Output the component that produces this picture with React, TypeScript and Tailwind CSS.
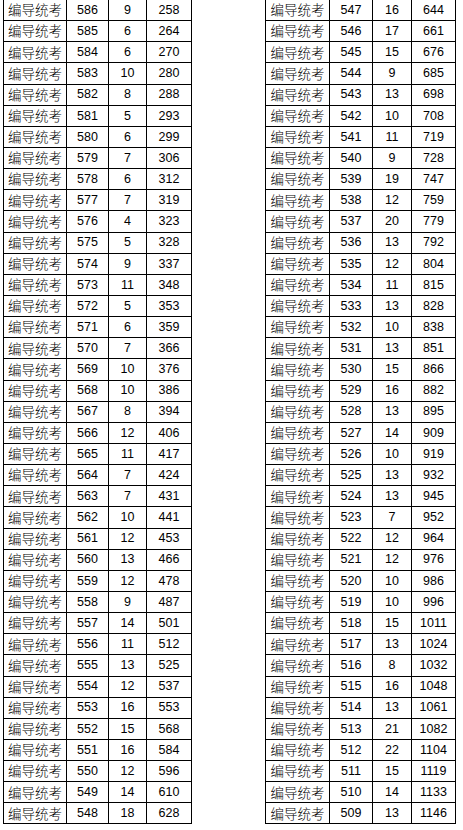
import React from "react";

const left: [string, string, string][] = [
  ["586", "9", "258"], ["585", "6", "264"], ["584", "6", "270"], ["583", "10", "280"],
  ["582", "8", "288"], ["581", "5", "293"], ["580", "6", "299"], ["579", "7", "306"],
  ["578", "6", "312"], ["577", "7", "319"], ["576", "4", "323"], ["575", "5", "328"],
  ["574", "9", "337"], ["573", "11", "348"], ["572", "5", "353"], ["571", "6", "359"],
  ["570", "7", "366"], ["569", "10", "376"], ["568", "10", "386"], ["567", "8", "394"],
  ["566", "12", "406"], ["565", "11", "417"], ["564", "7", "424"], ["563", "7", "431"],
  ["562", "10", "441"], ["561", "12", "453"], ["560", "13", "466"], ["559", "12", "478"],
  ["558", "9", "487"], ["557", "14", "501"], ["556", "11", "512"], ["555", "13", "525"],
  ["554", "12", "537"], ["553", "16", "553"], ["552", "15", "568"], ["551", "16", "584"],
  ["550", "12", "596"], ["549", "14", "610"], ["548", "18", "628"],
];

const right: [string, string, string][] = [
  ["547", "16", "644"], ["546", "17", "661"], ["545", "15", "676"], ["544", "9", "685"],
  ["543", "13", "698"], ["542", "10", "708"], ["541", "11", "719"], ["540", "9", "728"],
  ["539", "19", "747"], ["538", "12", "759"], ["537", "20", "779"], ["536", "13", "792"],
  ["535", "12", "804"], ["534", "11", "815"], ["533", "13", "828"], ["532", "10", "838"],
  ["531", "13", "851"], ["530", "15", "866"], ["529", "16", "882"], ["528", "13", "895"],
  ["527", "14", "909"], ["526", "10", "919"], ["525", "13", "932"], ["524", "13", "945"],
  ["523", "7", "952"], ["522", "12", "964"], ["521", "12", "976"], ["520", "10", "986"],
  ["519", "10", "996"], ["518", "15", "1011"], ["517", "13", "1024"], ["516", "8", "1032"],
  ["515", "16", "1048"], ["514", "13", "1061"], ["513", "21", "1082"], ["512", "22", "1104"],
  ["511", "15", "1119"], ["510", "14", "1133"], ["509", "13", "1146"],
];

const cjk = "font-['Noto_Sans_CJK_SC',sans-serif] font-light text-[13.5px]";
const num = "font-['Liberation_Sans',sans-serif] text-[12.5px]";
const cell = "flex items-center justify-center border-r border-b border-black text-black leading-none";

function Table({ rows, cols }: { rows: [string, string, string][]; cols: string }) {
  return (
    <div className={`grid ${cols} grid-rows-[repeat(39,21.15px)] border-l border-black`}>
      {rows.map((r, i) => (
        <React.Fragment key={i}>
          <div className={`${cell} ${cjk}`}>编导统考</div>
          <div className={`${cell} ${num}`}>{r[0]}</div>
          <div className={`${cell} ${num}`}>{r[1]}</div>
          <div className={`${cell} ${num}`}>{r[2]}</div>
        </React.Fragment>
      ))}
    </div>
  );
}

export default function App() {
  return (
    <div className="w-[463px] h-[830px] bg-white overflow-hidden flex items-start pl-[3px] gap-[73px]">
      <Table rows={left} cols="grid-cols-[63px_42px_38px_45px]" />
      <Table rows={right} cols="grid-cols-[64px_43px_39px_44px]" />
    </div>
  );
}
